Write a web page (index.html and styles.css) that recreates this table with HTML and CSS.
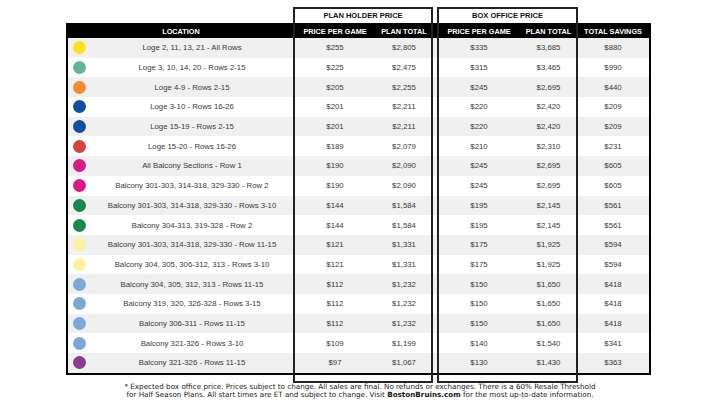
FILE: index.html
```html
<!DOCTYPE html>
<html>
<head>
<meta charset="utf-8">
<link rel="stylesheet" href="styles.css">
</head>
<body>
<div class="page">
  <div class="frame frame-ph"><div class="frame-label">PLAN HOLDER PRICE</div></div>
  <div class="frame frame-bo"><div class="frame-label">BOX OFFICE PRICE</div></div>

  <div class="table">
    <div class="row head">
      <div class="c loc-head">LOCATION</div>
      <div class="c">PRICE PER GAME</div>
      <div class="c">PLAN TOTAL</div>
      <div class="c"></div>
      <div class="c">PRICE PER GAME</div>
      <div class="c">PLAN TOTAL</div>
      <div class="c">TOTAL SAVINGS</div>
    </div>

    <div class="row"><div class="c dotc"><span class="dot yellow"></span></div><div class="c">Loge 2, 11, 13, 21 - All Rows</div><div class="c">$255</div><div class="c">$2,805</div><div class="c"></div><div class="c">$335</div><div class="c">$3,685</div><div class="c">$880</div></div>
    <div class="row"><div class="c dotc"><span class="dot teal"></span></div><div class="c">Loge 3, 10, 14, 20 - Rows 2-15</div><div class="c">$225</div><div class="c">$2,475</div><div class="c"></div><div class="c">$315</div><div class="c">$3,465</div><div class="c">$990</div></div>
    <div class="row"><div class="c dotc"><span class="dot orange"></span></div><div class="c">Loge 4-9 - Rows 2-15</div><div class="c">$205</div><div class="c">$2,255</div><div class="c"></div><div class="c">$245</div><div class="c">$2,695</div><div class="c">$440</div></div>
    <div class="row"><div class="c dotc"><span class="dot navy"></span></div><div class="c">Loge 3-10 - Rows 16-26</div><div class="c">$201</div><div class="c">$2,211</div><div class="c"></div><div class="c">$220</div><div class="c">$2,420</div><div class="c">$209</div></div>
    <div class="row"><div class="c dotc"><span class="dot navy"></span></div><div class="c">Loge 15-19 - Rows 2-15</div><div class="c">$201</div><div class="c">$2,211</div><div class="c"></div><div class="c">$220</div><div class="c">$2,420</div><div class="c">$209</div></div>
    <div class="row"><div class="c dotc"><span class="dot red"></span></div><div class="c">Loge 15-20 - Rows 16-26</div><div class="c">$189</div><div class="c">$2,079</div><div class="c"></div><div class="c">$210</div><div class="c">$2,310</div><div class="c">$231</div></div>
    <div class="row"><div class="c dotc"><span class="dot magenta"></span></div><div class="c">All Balcony Sections - Row 1</div><div class="c">$190</div><div class="c">$2,090</div><div class="c"></div><div class="c">$245</div><div class="c">$2,695</div><div class="c">$605</div></div>
    <div class="row"><div class="c dotc"><span class="dot magenta"></span></div><div class="c">Balcony 301-303, 314-318, 329-330 - Row 2</div><div class="c">$190</div><div class="c">$2,090</div><div class="c"></div><div class="c">$245</div><div class="c">$2,695</div><div class="c">$605</div></div>
    <div class="row"><div class="c dotc"><span class="dot green"></span></div><div class="c">Balcony 301-303, 314-318, 329-330 - Rows 3-10</div><div class="c">$144</div><div class="c">$1,584</div><div class="c"></div><div class="c">$195</div><div class="c">$2,145</div><div class="c">$561</div></div>
    <div class="row"><div class="c dotc"><span class="dot green"></span></div><div class="c">Balcony 304-313, 319-328 - Row 2</div><div class="c">$144</div><div class="c">$1,584</div><div class="c"></div><div class="c">$195</div><div class="c">$2,145</div><div class="c">$561</div></div>
    <div class="row"><div class="c dotc"><span class="dot pale"></span></div><div class="c">Balcony 301-303, 314-318, 329-330 - Row 11-15</div><div class="c">$121</div><div class="c">$1,331</div><div class="c"></div><div class="c">$175</div><div class="c">$1,925</div><div class="c">$594</div></div>
    <div class="row"><div class="c dotc"><span class="dot pale"></span></div><div class="c">Balcony 304, 305, 306-312, 313 - Rows 3-10</div><div class="c">$121</div><div class="c">$1,331</div><div class="c"></div><div class="c">$175</div><div class="c">$1,925</div><div class="c">$594</div></div>
    <div class="row"><div class="c dotc"><span class="dot sky"></span></div><div class="c">Balcony 304, 305, 312, 313 - Rows 11-15</div><div class="c">$112</div><div class="c">$1,232</div><div class="c"></div><div class="c">$150</div><div class="c">$1,650</div><div class="c">$418</div></div>
    <div class="row"><div class="c dotc"><span class="dot sky"></span></div><div class="c">Balcony 319, 320, 326-328 - Rows 3-15</div><div class="c">$112</div><div class="c">$1,232</div><div class="c"></div><div class="c">$150</div><div class="c">$1,650</div><div class="c">$418</div></div>
    <div class="row"><div class="c dotc"><span class="dot sky"></span></div><div class="c">Balcony 306-311 - Rows 11-15</div><div class="c">$112</div><div class="c">$1,232</div><div class="c"></div><div class="c">$150</div><div class="c">$1,650</div><div class="c">$418</div></div>
    <div class="row"><div class="c dotc"><span class="dot sky"></span></div><div class="c">Balcony 321-326 - Rows 3-10</div><div class="c">$109</div><div class="c">$1,199</div><div class="c"></div><div class="c">$140</div><div class="c">$1,540</div><div class="c">$341</div></div>
    <div class="row"><div class="c dotc"><span class="dot purple"></span></div><div class="c">Balcony 321-326 - Rows 11-15</div><div class="c">$97</div><div class="c">$1,067</div><div class="c"></div><div class="c">$130</div><div class="c">$1,430</div><div class="c">$363</div></div>
  </div>

  <div class="note">
    <div>* Expected box office price. Prices subject to change. All sales are final. No refunds or exchanges. There is a 60% Resale Threshold</div>
    <div>for Half Season Plans. All start times are ET and subject to change. Visit <b>BostonBruins.com</b> for the most up-to-date information.</div>
  </div>
</div>
</body>
</html>
```

FILE: styles.css
```css
html, body {
  margin: 0;
  padding: 0;
  background: #fff;
}

.page {
  position: relative;
  width: 720px;
  height: 405px;
  padding: 23px 0 0 66px;
  box-sizing: border-box;
  font-family: "Liberation Sans", Arial, sans-serif;
}

.table {
  width: 581px;
  border: 2px solid #000;
}

.row {
  display: grid;
  grid-template-columns: 22px 204px 82px 56px 6px 82px 57px 72px;
  height: 19.7px;
  align-items: center;
  font-size: 7.8px;
  color: #3a3a3a;
}

.row:nth-child(even) {
  background: #f0f0f0;
}

.row.head {
  grid-template-columns: 226px 82px 56px 6px 82px 57px 72px;
  height: 13px;
  background: #000;
  color: #fff;
  font-weight: bold;
  font-size: 7.3px;
}

.c {
  text-align: center;
  white-space: nowrap;
}

.dotc {
  display: flex;
  justify-content: center;
  align-items: center;
}

.dot {
  display: block;
  width: 13px;
  height: 13px;
  border-radius: 50%;
}

.yellow { background: #fce31e; }
.teal { background: #62b496; }
.orange { background: #f38a2b; }
.navy { background: #0e4f9e; }
.red { background: #d9433f; }
.magenta { background: #da1a82; }
.green { background: #17894a; }
.pale { background: #fbf39e; }
.sky { background: #7aa9d5; }
.purple { background: #8e3a8f; }

.frame {
  position: absolute;
  top: 7px;
  height: 376px;
  border: 2px solid #222;
  box-sizing: border-box;
  z-index: 2;
}

.frame-ph {
  left: 293px;
  width: 140px;
}

.frame-bo {
  left: 437px;
  width: 141px;
}

.frame-label {
  height: 14px;
  line-height: 14px;
  text-align: center;
  font-size: 7.5px;
  font-weight: bold;
  color: #111;
}

.note {
  margin: 8px 0 0 -66px;
  width: 720px;
  text-align: center;
  font-family: "DejaVu Sans", sans-serif;
  font-size: 7.2px;
  line-height: 8px;
  color: #1a1a1a;
}

.note b {
  font-weight: bold;
}
```
